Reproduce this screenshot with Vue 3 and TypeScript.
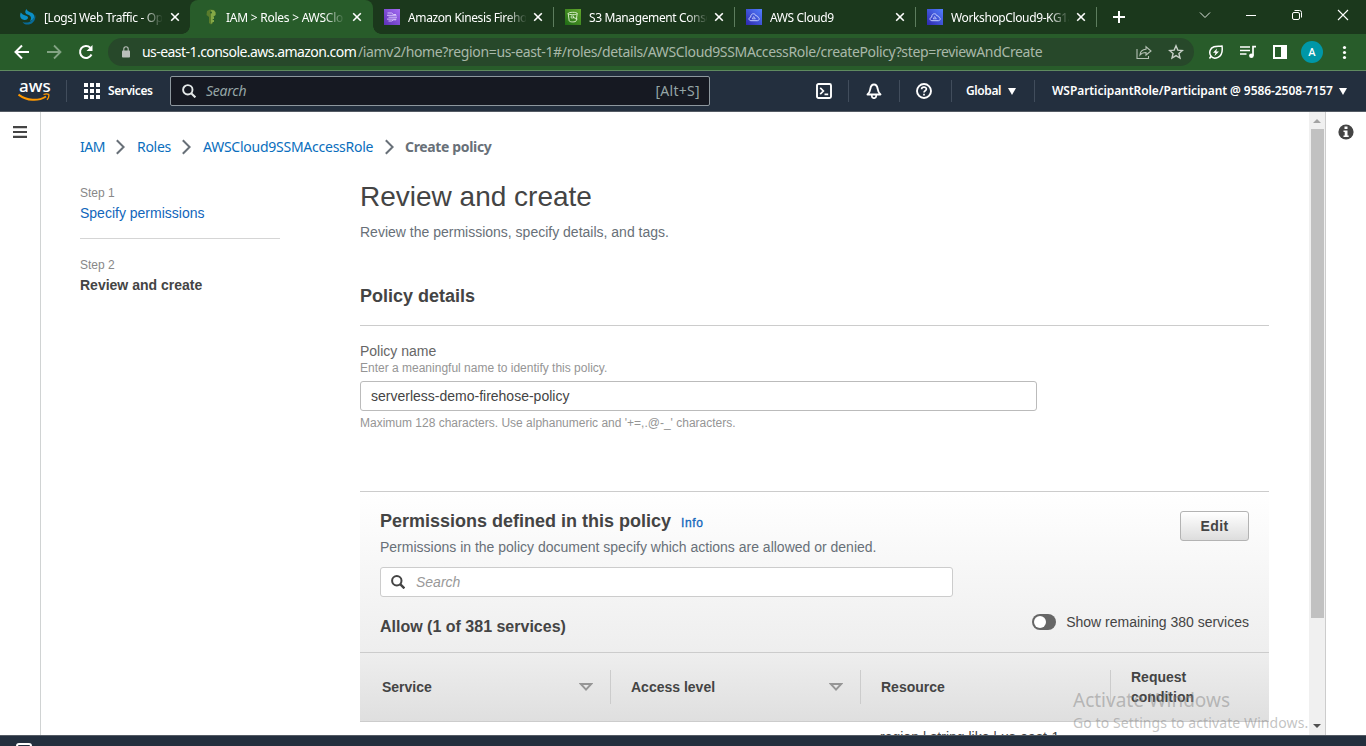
<script setup lang="ts">
interface Tab {
  title: string
  icon: 'swirl' | 'key' | 'kinesis' | 's3' | 'cloud'
  active?: boolean
  sep?: boolean
}

const tabs: Tab[] = [
  { title: '[Logs] Web Traffic - Ope', icon: 'swirl' },
  { title: 'IAM > Roles > AWSCloud', icon: 'key', active: true },
  { title: 'Amazon Kinesis Firehose', icon: 'kinesis', sep: true },
  { title: 'S3 Management Console', icon: 's3', sep: true },
  { title: 'AWS Cloud9', icon: 'cloud', sep: true },
  { title: 'WorkshopCloud9-KG1a', icon: 'cloud', sep: true },
]

const crumbs = [
  { label: 'IAM', cls: 'c1' },
  { label: 'Roles', cls: 'c2' },
  { label: 'AWSCloud9SSMAccessRole', cls: 'c3' },
]

const columns = [
  { label: 'Service', sortable: true },
  { label: 'Access level', sortable: true },
  { label: 'Resource', sortable: false },
  { label: 'Request condition', sortable: false },
]
</script>

<template>
  <div class="screen">
    <div class="tabstrip">
      <div v-for="t in tabs" :key="t.title" class="tab" :class="{ active: t.active, sep: t.sep }">
        <svg v-if="t.icon === 'swirl'" class="fav" viewBox="0 0 16 16">
          <path d="M.8 3.500c-1.600 3.500-.3 6.500 2.700 7.300 2.700.7 4.500-.5 4.500-2.300C8 6 3 7 .8 3.500z" fill="#0b8fc4" />
          <path d="M6.500 0C4.500 2.500 5 4.800 7.500 5.500c3.500 1 4.500 3.500 2.500 6.500 4-.8 5.500-4.500 3.300-7C11.500 3 8 3.500 6.500 0z" fill="#0b8fc4" />
          <path d="M15 5.500c1.300 4-1 9-6 10-3 .5-5.500-.7-6.500-2.500 3 1 6 .8 8.500-1 2-1.500 3.500-3.500 4-6.500z" fill="#086b98" />
        </svg>
        <svg v-else-if="t.icon === 'key'" class="fav" viewBox="0 0 16 16">
          <path d="M4 2l3-1.500 4 .5 1.500 2v3L10 8v6l-2 1.500L6 14V8L3.500 6z" fill="#5a7c2c" />
          <path d="M8 1l3 .5 1.500 2v2.500L10 8h1v2H9.500v1H11v2H9.500L8 15z" fill="#84a846" />
          <circle cx="8" cy="3.600" r="1" fill="#285c2a" />
        </svg>
        <svg v-else-if="t.icon === 'kinesis'" class="fav" viewBox="0 0 16 16">
          <defs><linearGradient id="gk" x1="0" y1="1" x2="1" y2="0"><stop stop-color="#5a30b5" /><stop offset="1" stop-color="#a66df5" /></linearGradient></defs>
          <rect width="16" height="16" fill="url(#gk)" />
          <path d="M3.500 4h4l2 1.500H12M3 6.300h9.500M4.500 8.200H13M3 10.100h9.500M4.500 12h3l2-1.200H12" fill="none" stroke="#e0cfff" stroke-width=".9" />
        </svg>
        <svg v-else-if="t.icon === 's3'" class="fav" viewBox="0 0 16 16">
          <defs><linearGradient id="gs" x1="0" y1="1" x2="1" y2="0"><stop stop-color="#1e6b15" /><stop offset="1" stop-color="#64a82d" /></linearGradient></defs>
          <rect width="16" height="16" fill="url(#gs)" />
          <path d="M3.200 4.500c0-1.600 9-1.600 9 0s-9 1.600-9 0l1 7.300c.3 1.500 6.700 1.500 7 0l1-7.300M8 8.300l4.500 1.800" fill="none" stroke="#d5ecc6" stroke-width="1" />
          <path d="M6.200 7h2.300v2H6.200z" fill="none" stroke="#d5ecc6" stroke-width=".8" />
        </svg>
        <svg v-else class="fav" viewBox="0 0 16 16">
          <defs><linearGradient id="gc" x1="0" y1="1" x2="1" y2="0"><stop stop-color="#2e27ad" /><stop offset="1" stop-color="#527fff" /></linearGradient></defs>
          <rect width="16" height="16" fill="url(#gc)" />
          <path d="M5 11.700c-2.600 0-2.600-3.300-.3-3.500C4.500 4 9.300 3.700 10 7c1-.5 1.900.2 1.800 1.200 2 .3 1.800 3.500-.4 3.500z" fill="none" stroke="#c3cdff" stroke-width="1" />
          <path d="M6.300 9.700l1.400-2.200 1.400 2.200M6 9.800h3.500" fill="none" stroke="#c3cdff" stroke-width=".8" />
        </svg>
        <span class="tab-title">{{ t.title }}</span>
        <svg class="tab-close" viewBox="0 0 10 10"><path d="M1.200 1.200l7.600 7.600M8.800 1.200L1.200 8.800" stroke="#fff" stroke-width="1.600" /></svg>
      </div>
      <svg class="newtab" viewBox="0 0 12 12"><path d="M6 0v12M0 6h12" stroke="#fff" stroke-width="2" /></svg>
      <div class="winctl">
        <svg width="12" height="12" viewBox="0 0 12 12"><path d="M1 3.500l5 5 5-5" fill="none" stroke="#dfe6df" /></svg>
        <svg width="12" height="12" viewBox="0 0 12 12"><path d="M1 6.500h10" stroke="#fff" /></svg>
        <svg width="12" height="12" viewBox="0 0 12 12"><rect x="1.500" y="3.500" width="7" height="7" rx="1.500" fill="none" stroke="#fff" /><path d="M3.500 1.500h5a2 2 0 0 1 2 2v5" fill="none" stroke="#fff" /></svg>
        <svg width="12" height="12" viewBox="0 0 12 12"><path d="M1 1l10 10M11 1L1 11" stroke="#fff" stroke-width="1.100" /></svg>
      </div>
    </div>

    <div class="toolbar">
      <svg class="nav-i" viewBox="0 0 16 16"><path d="M15 8H2M8 1.500L1.500 8 8 14.500" fill="none" stroke="#fff" stroke-width="2" /></svg>
      <svg class="nav-i" viewBox="0 0 16 16"><path d="M1 8h13M8 1.500L14.500 8 8 14.500" fill="none" stroke="#83a384" stroke-width="1.800" /></svg>
      <svg class="nav-i" viewBox="0 0 16 16"><path d="M13.500 10.500A6 6 0 1 1 12.300 3.700" fill="none" stroke="#fff" stroke-width="2" /><path d="M14.500 1v6h-6z" fill="#fff" /></svg>
      <div class="omnibox">
        <svg class="lock" viewBox="0 0 10 12"><rect x="1" y="4.500" width="8" height="7" rx=".8" fill="#b9bfba" /><path d="M2.800 5V3a2.200 2.200 0 0 1 4.400 0v2" fill="none" stroke="#b9bfba" stroke-width="1.100" /></svg>
        <span class="host">us-east-1.console.aws.amazon.com</span><span class="path">/iamv2/home?region=us-east-1#/roles/details/AWSCloud9SSMAccessRole/createPolicy?step=reviewAndCreate</span>
        <span class="omni-right">
          <svg width="16" height="16" viewBox="0 0 16 16"><path d="M1 5v9.500h11.500V12M4 11c.3-4 2.500-5.500 6-5.700V2.800L15 7l-5 4V8.500C7.500 8.500 5.500 9 4 11z" fill="none" stroke="#b4c1b4" stroke-width="1.100" /></svg>
          <svg width="16" height="16" viewBox="0 0 16 16"><path d="M8 1.800l1.800 4.300 4.600.4-3.500 3 1.100 4.500-4-2.400L4 14l1.100-4.500-3.500-3 4.600-.4z" fill="none" stroke="#c8d1c8" stroke-width="1.400" /></svg>
        </span>
      </div>
      <div class="ext">
        <svg width="16" height="16" viewBox="0 0 16 16"><path d="M14 2c.8 5.500-.3 9.500-4 11.300-3 1.400-6 .6-7.300-1.600C.7 8.500 2 4 6 2.700 8.700 1.800 11 2.500 14 2zM1.500 14.500l2-3" fill="none" stroke="#fff" stroke-width="1.500" /><path d="M9 4.500L5 8.700h2.500L6.500 12 11 7.600H8.300z" fill="#fff" /></svg>
        <svg width="16" height="16" viewBox="0 0 16 16"><path d="M0 3h10M0 6.500h10M0 10h6.500M16 2.700h-3v9" fill="none" stroke="#fff" stroke-width="1.700" /><circle cx="11.400" cy="11.700" r="2.300" fill="#fff" /></svg>
        <svg width="16" height="16" viewBox="0 0 16 16"><path d="M1 1h14v14H1zM3 3v10h6V3z" fill="#fff" fill-rule="evenodd" /></svg>
        <span class="avatar">A</span>
        <svg width="16" height="16" viewBox="0 0 16 16"><circle cx="8.500" cy="3.500" r="1.600" fill="#fff" /><circle cx="8.500" cy="8.500" r="1.600" fill="#fff" /><circle cx="8.500" cy="13.500" r="1.600" fill="#fff" /></svg>
      </div>
    </div>

    <div class="awsnav">
      <div class="aws-logo">
        <span>aws</span>
        <svg width="32" height="9" viewBox="0 0 32 9"><path d="M.5 1.500C9 8 20 8.500 28 3.500" fill="none" stroke="#f90" stroke-width="2" /><path d="M25.500 1.500c2-.7 4-.8 5.200-.2.400 1.500-.3 4-1.700 5.500" fill="none" stroke="#f90" stroke-width="1.300" /></svg>
      </div>
      <i class="vr" />
      <svg class="grid9" viewBox="0 0 16 16"><path d="M0 0h4v4H0zM6 0h4v4H6zM12 0h4v4h-4zM0 6h4v4H0zM6 6h4v4H6zM12 6h4v4h-4zM0 12h4v4H0zM6 12h4v4H6zM12 12h4v4h-4z" fill="#fff" /></svg>
      <span class="services">Services</span>
      <div class="aws-search">
        <svg width="14" height="14" viewBox="0 0 14 14"><circle cx="5.800" cy="5.800" r="4.700" fill="none" stroke="#e4e8e8" stroke-width="1.900" /><path d="M9.200 9.200l4.200 4.200" stroke="#e4e8e8" stroke-width="2.100" /></svg>
        <em>Search</em><span class="alt">[Alt+S]</span>
      </div>
      <div class="aws-right">
        <svg class="ic" viewBox="0 0 16 16"><rect x="1" y="1" width="14" height="14" rx="1.500" fill="none" stroke="#fff" stroke-width="1.900" /><path d="M4.200 4.800L7.400 8l-3.200 3.200M8.500 11.300h3.700" fill="none" stroke="#fff" stroke-width="1.700" /></svg>
        <i class="vr" />
        <svg class="ic" viewBox="0 0 16 16"><path d="M1.500 11.500C3.800 9.500 4 8.500 4.300 6 4.700 3.500 6 1.500 8 1.500s3.300 2 3.700 4.500c.3 2.500.5 3.500 2.800 5.500z" fill="none" stroke="#fff" stroke-width="1.900" stroke-linejoin="round" /><path d="M5.800 12v1a2.200 2.200 0 0 0 4.400 0v-1" fill="none" stroke="#fff" stroke-width="1.700" /></svg>
        <i class="vr wide" />
        <svg class="ic" viewBox="0 0 16 16"><circle cx="8" cy="8" r="7" fill="none" stroke="#fff" stroke-width="1.900" /><path d="M5.600 6.300c0-3 4.800-2.900 4.800-.2C10.400 7.800 8 7.700 8 9.500M8 10.700v1.800" fill="none" stroke="#fff" stroke-width="1.700" /></svg>
        <i class="vr last" />
        <span class="global">Global</span><i class="caret" />
        <i class="vr end" />
        <span class="user">WSParticipantRole/Participant @ 9586-2508-7157</span><i class="caret" />
      </div>
    </div>

    <div class="body">
      <div class="left-rail"><svg width="14" height="12" viewBox="0 0 14 12"><path d="M0 1.200h14M0 6h14M0 10.800h14" stroke="#444" stroke-width="2.200" /></svg></div>
      <div class="content">
        <nav class="crumbs">
          <template v-for="c in crumbs" :key="c.label">
            <a :class="c.cls">{{ c.label }}</a>
            <svg width="9" height="16" viewBox="0 0 9 16"><path d="M.8 1.200L7.600 8 .8 14.800" fill="none" stroke="#687078" stroke-width="2" /></svg>
          </template>
          <b>Create policy</b>
        </nav>
        <div class="cols">
          <aside class="steps">
            <small>Step 1</small>
            <a>Specify permissions</a>
            <hr />
            <small>Step 2</small>
            <b>Review and create</b>
          </aside>
          <main class="main">
            <h1>Review and create</h1>
            <p class="desc">Review the permissions, specify details, and tags.</p>
            <h2 class="details">Policy details</h2>
            <div class="form">
              <label>Policy name</label>
              <span class="hint">Enter a meaningful name to identify this policy.</span>
              <div class="input">serverless-demo-firehose-policy</div>
              <span class="hint after">Maximum 128 characters. Use alphanumeric and '+=,.@-_' characters.</span>
            </div>
            <section class="perm">
              <div class="perm-head">
                <div class="perm-title"><h2>Permissions defined in this policy</h2><a>Info</a><button>Edit</button></div>
                <p>Permissions in the policy document specify which actions are allowed or denied.</p>
                <div class="filter">
                  <svg width="14" height="14" viewBox="0 0 14 14"><circle cx="5.800" cy="5.800" r="4.700" fill="none" stroke="#444" stroke-width="2" /><path d="M9.200 9.200l4.200 4.200" stroke="#444" stroke-width="2.400" /></svg>
                  <em>Search</em>
                </div>
                <div class="allow">
                  <h3>Allow (1 of 381 services)</h3>
                  <span class="toggle"><i /></span>
                  <span class="show">Show remaining 380 services</span>
                </div>
              </div>
              <div class="thead">
                <div v-for="c in columns" :key="c.label" class="th">
                  <span>{{ c.label }}</span>
                  <svg v-if="c.sortable" width="14" height="8" viewBox="0 0 14 8"><path d="M1.800 1h10.400L7 6.600z" fill="none" stroke="#969696" stroke-width="1.900" /></svg>
                </div>
              </div>
              <div class="row">region | string like | us-east-1</div>
            </section>
          </main>
        </div>
      </div>
      <div class="scroll">
        <i class="up" />
        <i class="thumb" />
        <i class="down" />
      </div>
      <div class="right-rail">
        <svg width="16" height="16" viewBox="0 0 16 16"><circle cx="8" cy="8" r="7.600" fill="#444" /><path d="M6.500 2.500h3v2.500h-3zM5.500 6.500h4V11.500h1.200V13H5.500v-1.500h1.200V8H5.500z" fill="#fff" /></svg>
      </div>
    </div>

    <div class="footer"><svg width="16" height="4" viewBox="0 0 16 4"><path d="M1 6V3a2 2 0 0 1 2-2h10a2 2 0 0 1 2 2v3" fill="none" stroke="#fff" stroke-width="2" /></svg></div>

    <div class="watermark"><div class="w1">Activate Windows</div><div class="w2">Go to Settings to activate Windows.</div></div>
  </div>
</template>

<style>
body { overflow: hidden; }
</style>

<style scoped>
* { box-sizing: border-box; }
.screen { position: relative; width: 1366px; height: 746px; overflow: hidden; display: flex; flex-direction: column; background: #fff; font-family: "Liberation Sans", Arial, sans-serif; color: #444; font-size: 14px; white-space: nowrap; }
svg { display: block; flex: none; }
i { display: block; flex: none; }
h1, h2, h3, p { margin: 0; }

.tabstrip { height: 34px; flex: none; background: #1b381c; display: flex; align-items: center; padding-left: 8px; font: 12px "Noto Sans", "Open Sans", sans-serif; color: #fff; }
.tab { position: relative; width: 181px; height: 34px; display: flex; align-items: center; padding-left: 13px; flex: none; }
.tab:first-child { width: 182px; padding-left: 12px; }
.tab:first-child .tab-close { margin-left: 8px; }
.tab.active { background: #285c2a; border-radius: 8px 8px 0 0; width: 183px; margin-right: -2px; }
.tab.active::before, .tab.active::after { content: ""; position: absolute; bottom: 0; width: 8px; height: 8px; }
.tab.active::before { left: -8px; background: radial-gradient(circle at 0 0, transparent 7.5px, #285c2a 8px); }
.tab.active::after { right: -8px; background: radial-gradient(circle at 100% 0, transparent 7.5px, #285c2a 8px); }
.tab.sep::after { content: ""; position: absolute; right: -2px; top: 7px; width: 1px; height: 20px; background: #5d7d5e; }
.fav { width: 16px; height: 16px; }
.tab-title { width: 118px; margin-left: 8px; overflow: hidden; letter-spacing: -0.38px; -webkit-mask-image: linear-gradient(90deg, #000 98px, transparent 119px); mask-image: linear-gradient(90deg, #000 98px, transparent 119px); }
.tab.active .tab-title { margin-left: 7px; margin-right: 1px; letter-spacing: -0.25px; }
.tab-close { width: 10px; height: 10px; margin-left: 7px; }
.newtab { width: 12px; height: 12px; margin-left: 18px; }
.winctl { margin-left: auto; display: flex; gap: 34px; padding: 0 17px 5px 0; }

.toolbar { height: 37px; flex: none; background: #285c2a; border-bottom: 1px solid #5f8a60; display: flex; align-items: center; padding-left: 14px; }
.nav-i { width: 16px; height: 16px; margin-right: 16px; }
.omnibox { width: 1086px; height: 28px; margin-left: -2px; border-radius: 14px; background: #27482a; display: flex; align-items: center; padding-left: 13px; font: 14px "Noto Sans", "Open Sans", sans-serif; color: #a9b8a9; }
.lock { width: 10px; height: 12px; margin-right: 11px; }
.host, .path { padding-bottom: 2px; }
.host { color: #fff; width: 216px; letter-spacing: -0.55px; }
.path { letter-spacing: -0.35px; }
.omni-right { margin-left: auto; display: flex; gap: 16px; padding-right: 10px; }
.ext { display: flex; align-items: center; gap: 16px; margin-left: 14px; }
.avatar { width: 22px; height: 22px; margin: 0 -3px; border-radius: 50%; background: #0097a7; color: #fff; display: grid; place-items: center; font: 500 11px Roboto, sans-serif; }

.awsnav { height: 41px; flex: none; background: #232f3e; border-bottom: 1px solid #545b64; display: flex; align-items: center; padding-left: 18px; color: #fff; font: 600 12px "Noto Sans", "Open Sans", sans-serif; }
.awsnav > span, .aws-right > span, .aws-search > em, .alt { padding-bottom: 1px; }
.aws-logo { width: 32px; height: 24px; }
.aws-logo span { display: block; font: 500 17px/15px "Noto Sans", "Open Sans", sans-serif; letter-spacing: 0; height: 16px; margin: -1px 0 0 1px; }
.aws-logo svg { margin-top: -1px; }
.vr { width: 1px; height: 22px; background: #414d5c; }
.aws-logo + .vr { margin-left: 16px; }
.grid9 { width: 16px; height: 16px; margin-left: 17px; }
.services { width: 45px; margin-left: 8px; letter-spacing: -0.4px; }
.aws-search { width: 540px; height: 30px; margin-left: 17px; border: 1px solid #8d979e; border-radius: 2px; background: #161922; display: flex; align-items: center; padding: 0 9px 0 11px; font: 14px "Noto Sans", sans-serif; color: #95a5a6; }
.aws-search em { margin-left: 10px; letter-spacing: -0.25px; }
.alt { margin-left: auto; letter-spacing: 0.3px; }
.aws-right { margin-left: 106px; display: flex; align-items: center; }
.ic { width: 16px; height: 16px; }
.aws-right .vr { margin: 0 17px 0 16px; }
.aws-right .vr.wide { margin: 0 16px 0 17px; }
.aws-right .vr.last { margin: 0 14px 0 19px; }
.aws-right .vr.end { margin: 0 17px 0 18px; }
.global { width: 36px; letter-spacing: -0.4px; }
.user { width: 281px; letter-spacing: -0.07px; }
.caret { margin-left: 6px; border: 4px solid transparent; border-top: 7px solid #fff; border-bottom: 0; }

.body { height: 623px; flex: none; display: flex; overflow: hidden; }
.left-rail { width: 41px; flex: none; border-right: 1px solid #d0d3d3; padding: 14px 0 0 13px; }
.content { width: 1268px; flex: none; padding: 25px 40px 0 39px; overflow: hidden; }
.crumbs { height: 20px; display: flex; align-items: center; font: 14px/20px "Noto Sans", sans-serif; color: #0a6ebd; }
.crumbs svg { margin: 0 12px 0 11px; }
.crumbs b { color: #687078; font-weight: 700; letter-spacing: -0.35px; margin-left: -1px; }
.c1 { width: 25px; letter-spacing: -0.5px; }
.c2 { width: 34px; letter-spacing: -0.3px; }
.c3 { width: 171px; letter-spacing: -0.25px; }
.cols { display: flex; }
.steps { width: 200px; margin-right: 80px; padding-top: 26px; display: flex; flex-direction: column; line-height: 20px; }
.steps small { font-size: 12px; color: #888; height: 20px; }
.steps a, .perm-title a { color: #1166bb; }
.steps hr { width: 200px; border: 0; height: 1px; background: #d5d5d5; margin: 15px 0 16px; }
.main { width: 909px; padding-top: 19px; }
h1 { font-size: 28px; font-weight: 400; line-height: 42px; }
.desc { line-height: 20px; margin-top: 4px; color: #687078; }
h2 { font-size: 18px; font-weight: 700; line-height: 24px; }
.details { margin-top: 42px; height: 42px; border-bottom: 1px solid #ccc; }
.form { display: flex; flex-direction: column; padding-top: 15px; height: 165px; }
.form label { line-height: 20px; color: #666; }
.hint { font-size: 12px; line-height: 16px; color: #959595; height: 16px; margin-top: -1px; }
.input { margin-top: 5px; width: 677px; height: 30px; border: 1px solid #bbb; border-radius: 3px; line-height: 28px; padding-left: 10px; }
.hint.after { margin-top: 4px; }
.perm-head { height: 162px; border-top: 1px solid #ccc; border-bottom: 1px solid #ccc; background: linear-gradient(#fff, #eee); padding: 19px 20px 0; }
.perm-title { height: 26px; display: flex; align-items: flex-start; }
.perm-title h2 { line-height: 20px; }
.perm-title a { font-size: 12px; margin: 3px auto 0 10px; line-height: 18px; letter-spacing: .6px; -webkit-text-stroke: .3px #1166bb; }
button { width: 69px; height: 30px; border: 1px solid #b3b3b3; border-radius: 3px; background: linear-gradient(#fff, #ddd); font: 700 14px "Liberation Sans", Arial, sans-serif; letter-spacing: .4px; color: #444; padding: 0; }
.perm-head p { line-height: 20px; color: #687078; }
.filter { margin-top: 10px; width: 573px; height: 30px; border: 1px solid #ccc; border-radius: 3px; background: #fff; display: flex; align-items: center; padding-left: 10px; color: #999; }
.filter em { margin-left: 11px; }
.allow { display: flex; align-items: center; height: 20px; margin-top: 15px; }
h3 { font-size: 16px; line-height: 20px; padding-top: 10px; }
.toggle { margin-left: auto; width: 24px; height: 16px; border-radius: 8px; background: #666; padding: 2px; }
.toggle i { width: 12px; height: 12px; border-radius: 50%; background: #fff; }
.show { margin-left: 10px; }
.thead { height: 69px; border-bottom: 1px solid #ccc; background: linear-gradient(#eee, #dfdfdf); display: grid; grid-template-columns: 251px 250px 250px 158px; align-items: center; font-weight: 700; line-height: 20px; }
.th { height: 34px; display: flex; align-items: center; justify-content: space-between; padding: 0 17px 0 20px; border-right: 1px solid #ccc; }
.th:first-child { padding-left: 22px; }
.th:last-child { border: 0; white-space: normal; padding-right: 60px; }
.row { padding: 7px 0 0 520px; line-height: 16px; }

.scroll { width: 17px; flex: none; background: #f0f0f0; border-right: 1px solid #ccc; display: flex; flex-direction: column; align-items: center; padding-top: 7px; }
.up { border: 4px solid transparent; border-bottom: 4px solid #a3a3a3; border-top: 0; }
.thumb { width: 13px; height: 489px; margin-top: 6px; background: #c1c1c1; }
.down { border: 4px solid transparent; border-top: 4px solid #505050; border-bottom: 0; margin-top: 106px; }
.right-rail { width: 40px; padding: 12px 0 0 12px; }
.footer { height: 11px; flex: none; background: #232f3e; border-top: 1px solid #545b64; padding: 7px 0 0 16px; }
.watermark { position: absolute; left: 1073px; top: 687px; color: rgba(135, 135, 135, .5); font-family: "Noto Sans", "Open Sans", sans-serif; }
.w1 { font-size: 19px; line-height: 27px; letter-spacing: 0; }
.w2 { font-size: 14px; line-height: 18px; letter-spacing: .1px; }
</style>
